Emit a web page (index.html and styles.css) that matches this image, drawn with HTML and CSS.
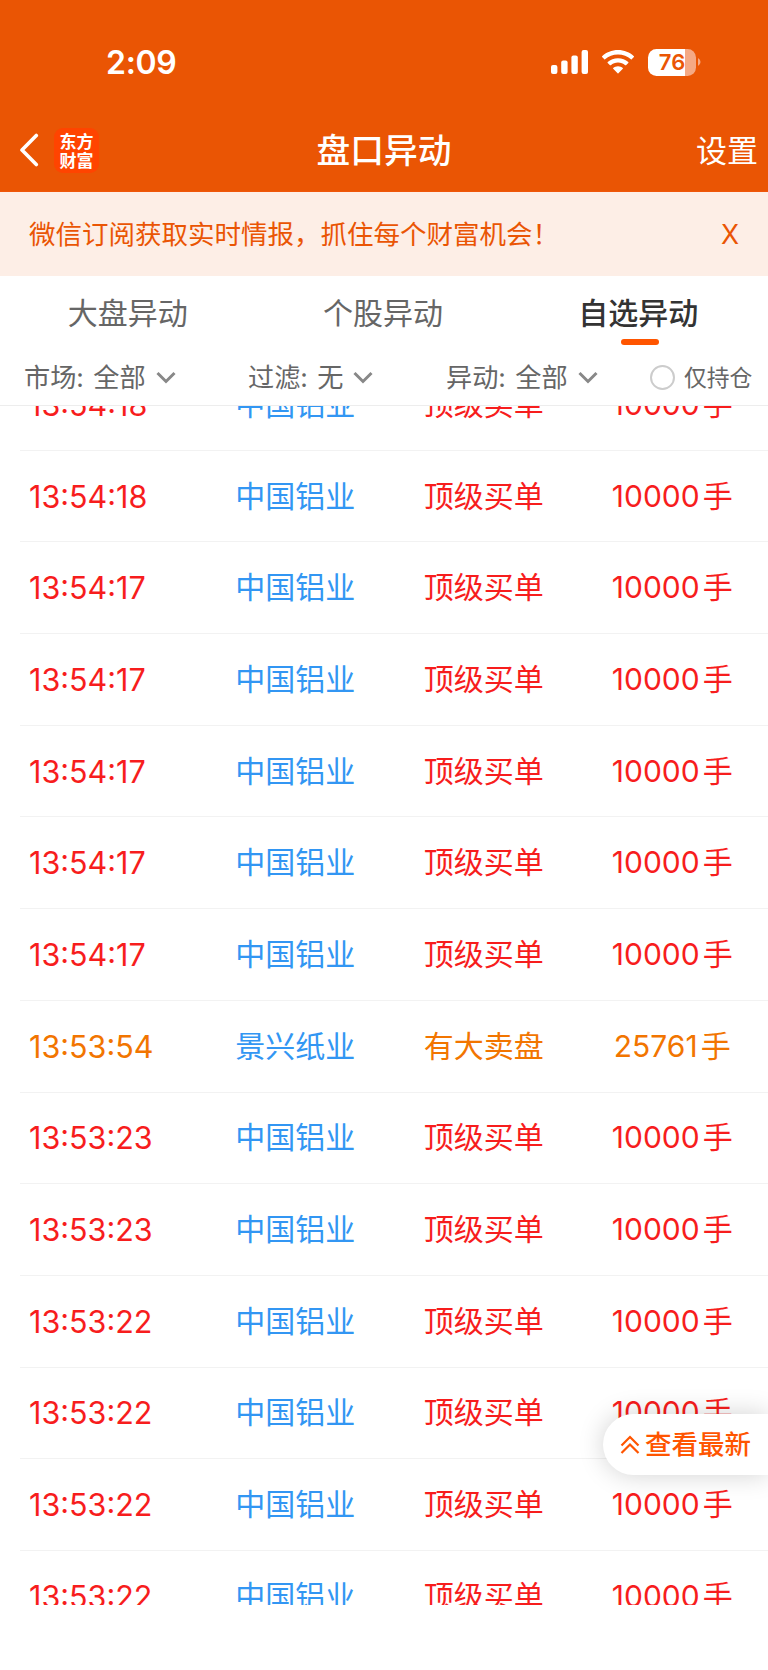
FILE: index.html
```html
<!DOCTYPE html>
<html lang="zh-CN">
<head>
    <meta charset="utf-8">
    <meta name="viewport" content="width=768">
    <title>盘口异动</title>
    <link rel="stylesheet" href="styles.css">
</head>

<body>
<div class="header">
    <div class="status">
        <span class="clock">2:09</span>
        <div class="status_icons">
            <svg class="signal" width="38" height="24" viewBox="0 0 38 24" fill="#fff">
                <rect x="0" y="15" width="6.4" height="9" rx="2"/>
                <rect x="10.2" y="10.5" width="6.4" height="13.5" rx="2"/>
                <rect x="20.4" y="5.5" width="6.4" height="18.5" rx="2"/>
                <rect x="30.6" y="0" width="6.4" height="24" rx="2"/>
            </svg>
            <svg class="wifi" width="32" height="24" viewBox="0 0 32 24" fill="#fff">
                <path d="M16 0C22.2 0 27.800 2.300 31.900 6.200Q32.200 6.600 31.900 7L29.700 9.200Q29.300 9.600 28.900 9.200C25.500 6 21 4.400 16 4.400S6.500 6 3.100 9.200Q2.700 9.600 2.300 9.200L.1 7Q-.2 6.600 .1 6.200C4.200 2.300 9.800 0 16 0Z"/>
                <path d="M16 8.200C20 8.200 23.600 9.700 26.300 12.100Q26.700 12.500 26.300 12.900L24 15.200Q23.600 15.500 23.200 15.200C21.200 13.500 18.800 12.600 16 12.600S10.800 13.500 8.800 15.200Q8.400 15.500 8 15.200L5.700 12.900Q5.300 12.500 5.700 12.100C8.400 9.700 12 8.200 16 8.200Z"/>
                <path d="M16 16.200C17.900 16.200 19.500 16.900 20.800 18Q21.200 18.400 20.800 18.800L16.400 23.200Q16 23.600 15.600 23.200L11.200 18.800Q10.800 18.400 11.200 18C12.500 16.900 14.100 16.200 16 16.200Z"/>
            </svg>
            <div class="battery"><span>76</span></div>
            <svg class="battery_tip" width="3" height="8" viewBox="0 0 3 8"><path d="M0 0Q2.500 1.500 2.500 4T0 8Z" fill="#f5a984"/></svg>
        </div>
    </div>
    <div class="nav">
        <div class="nav_left">
            <svg class="back" width="20" height="34" viewBox="0 0 20 34"><path d="M17.300 2.500L3 17L17.300 31.500" fill="none" stroke="#fff" stroke-width="3.600" stroke-linecap="round" stroke-linejoin="round"/></svg>
            <div class="logo"><span>东方</span><span>财富</span></div>
        </div>
        <h1>盘口异动</h1>
        <a class="setting" href="javascript:;">设置</a>
    </div>
</div>

<div class="notice">
    <span>微信订阅获取实时情报，抓住每个财富机会！</span>
    <a href="javascript:;">X</a>
</div>

<div class="tabs">
    <a href="javascript:;">大盘异动</a>
    <a href="javascript:;">个股异动</a>
    <a class="on" href="javascript:;">自选异动</a>
</div>

<div class="filter">
    <a class="f_market" href="javascript:;">市场: 全部<svg width="20" height="13" viewBox="0 0 20 13"><path d="M1.500 2L10 10.500L18.500 2"/></svg></a>
    <a class="f_pass" href="javascript:;">过滤: 无<svg width="20" height="13" viewBox="0 0 20 13"><path d="M1.500 2L10 10.500L18.500 2"/></svg></a>
    <a class="f_move" href="javascript:;">异动: 全部<svg width="20" height="13" viewBox="0 0 20 13"><path d="M1.500 2L10 10.500L18.500 2"/></svg></a>
    <label class="f_hold"><i></i>仅持仓</label>
</div>

<div class="list">
    <ul>
        <li><b>13:54:18</b><a>中国铝业</a><em>顶级买单</em><span>10000<i>手</i></span></li>
        <li><b>13:54:18</b><a>中国铝业</a><em>顶级买单</em><span>10000<i>手</i></span></li>
        <li><b>13:54:17</b><a>中国铝业</a><em>顶级买单</em><span>10000<i>手</i></span></li>
        <li><b>13:54:17</b><a>中国铝业</a><em>顶级买单</em><span>10000<i>手</i></span></li>
        <li><b>13:54:17</b><a>中国铝业</a><em>顶级买单</em><span>10000<i>手</i></span></li>
        <li><b>13:54:17</b><a>中国铝业</a><em>顶级买单</em><span>10000<i>手</i></span></li>
        <li><b>13:54:17</b><a>中国铝业</a><em>顶级买单</em><span>10000<i>手</i></span></li>
        <li class="sell"><b>13:53:54</b><a>景兴纸业</a><em>有大卖盘</em><span>25761<i>手</i></span></li>
        <li><b>13:53:23</b><a>中国铝业</a><em>顶级买单</em><span>10000<i>手</i></span></li>
        <li><b>13:53:23</b><a>中国铝业</a><em>顶级买单</em><span>10000<i>手</i></span></li>
        <li><b>13:53:22</b><a>中国铝业</a><em>顶级买单</em><span>10000<i>手</i></span></li>
        <li><b>13:53:22</b><a>中国铝业</a><em>顶级买单</em><span>10000<i>手</i></span></li>
        <li><b>13:53:22</b><a>中国铝业</a><em>顶级买单</em><span>10000<i>手</i></span></li>
        <li><b>13:53:22</b><a>中国铝业</a><em>顶级买单</em><span>10000<i>手</i></span></li>
    </ul>
</div>

<a class="latest" href="javascript:;">
    <svg width="20" height="20" viewBox="0 0 20 20"><path d="M1.500 10.500L10 2L18.500 10.500M1.500 18L10 9.500L18.500 18"/></svg><span>查看最新</span>
</a>
</body>
</html>
```
FILE: styles.css
```css
*{margin: 0;padding: 0;box-sizing: border-box;}
body{width: 768px;height: 1670px;background: #fff;overflow: hidden;font-family: Inter, "Noto Sans CJK SC", sans-serif;color: #666;}
a{color: inherit;text-decoration: none;}
svg{display: block;flex: none;}
b, em, i{font-weight: normal;font-style: normal;}

.header{height: 192px;background: #ea5504;color: #fff;border-bottom: 1px solid #f0560a;}
.status{display: flex;justify-content: space-between;height: 108px;padding: 49px 67px 0 106px;}
.clock{font-size: 32px;line-height: 28px;font-weight: 600;letter-spacing: -.3px;}
.status_icons{display: flex;align-items: flex-start;}
.signal{margin-top: 1px;}
.wifi{margin: 1px 14px 0 13px;}
.battery{width: 48px;height: 27px;border-radius: 8.5px;background: linear-gradient(90deg, #fff 37px, #f5a984 37px);color: #ea5504;font-size: 22px;line-height: 27px;font-weight: 600;text-align: center;}
.battery_tip{margin: 9px 0 0 2px;}
.nav{display: grid;grid-template-columns: 1fr auto 1fr;align-items: center;height: 84px;}
.nav_left{display: flex;align-items: center;padding-left: 19px;}
.logo{display: flex;flex-direction: column;width: 45px;height: 45px;margin-left: 15px;padding-top: 3px;border-radius: 9px;background: #ff4400;font: 700 17px/19px "Noto Sans CJK SC", sans-serif;text-align: center;}
.nav h1{padding-top: 1px;font-size: 33.7px;line-height: 50px;font-weight: 500;}
.setting{padding: 1px 10px 0 0;text-align: right;font-size: 31px;line-height: 50px;}

.notice{display: flex;justify-content: space-between;align-items: center;height: 84px;padding: 0 29px 0 29px;background: #fdeee6;color: #ea5504;font-size: 26.5px;line-height: 38px;}
.notice span{padding-bottom: 3px;font-family: "Noto Sans CJK SC", sans-serif;font-weight: 400;}

.tabs{display: grid;grid-template-columns: repeat(3, 1fr);height: 74px;padding-right: 2px;text-align: center;font-size: 30px;line-height: 74px;}
.tabs a{height: 74px;}
.tabs .on{position: relative;color: #333;font-weight: 500;}
.tabs .on:after{content: "";position: absolute;left: 110px;bottom: 5px;width: 38px;height: 6px;border-radius: 3px;background: #ff5500;}

.filter{display: grid;grid-template-columns: 224px 198px 204px 1fr;align-items: center;height: 56px;padding-left: 24px;border-bottom: 1px solid #ededed;font-size: 26.2px;line-height: 36px;word-spacing: 2px;}
.filter a, .filter label{display: flex;align-items: center;white-space: pre;}
.filter svg{margin: 0 0 0 10px;fill: none;stroke: #888;stroke-width: 3;}
.filter .f_hold{font-size: 22.8px;}
.f_hold i{width: 25px;height: 25px;margin: 0 9px 1px 0;border: 2px solid #ccc;border-radius: 50%;}

/* 列表上下滚动裁切 */
.list{display: flex;flex-direction: column;height: 1199px;overflow: hidden;}
.list ul{list-style: none;margin: -47px 0 0 20px;}
.list li{display: grid;grid-template-columns: 181px 188.5px 188.5px 188.5px;align-items: center;height: 91.7px;border-bottom: 1px solid #f2f2f2;color: #f71d1d;font-size: 30px;line-height: 44px;text-align: center;}
.list b{padding: 1px 0 0 9px;text-align: left;font-size: 30.5px;}
.list a, .list em, .list span{padding-bottom: 1px;}
.list a{color: #3296f3;}
.list span i{margin-left: 3px;}
.list .sell{color: #f27500;}

.latest{position: absolute;right: 0;top: 1414px;display: flex;align-items: center;width: 165px;height: 61px;padding-left: 17px;border-radius: 31px 0 0 31px;background: #fff;box-shadow: 0 0 26px rgba(0,0,0,.18);color: #ff5500;font-size: 26.5px;line-height: 38px;font-weight: 500;}
.latest span{padding-bottom: 1px;}
.latest svg{margin-right: 5px;fill: none;stroke: #ff5500;stroke-width: 2.2;}
```
